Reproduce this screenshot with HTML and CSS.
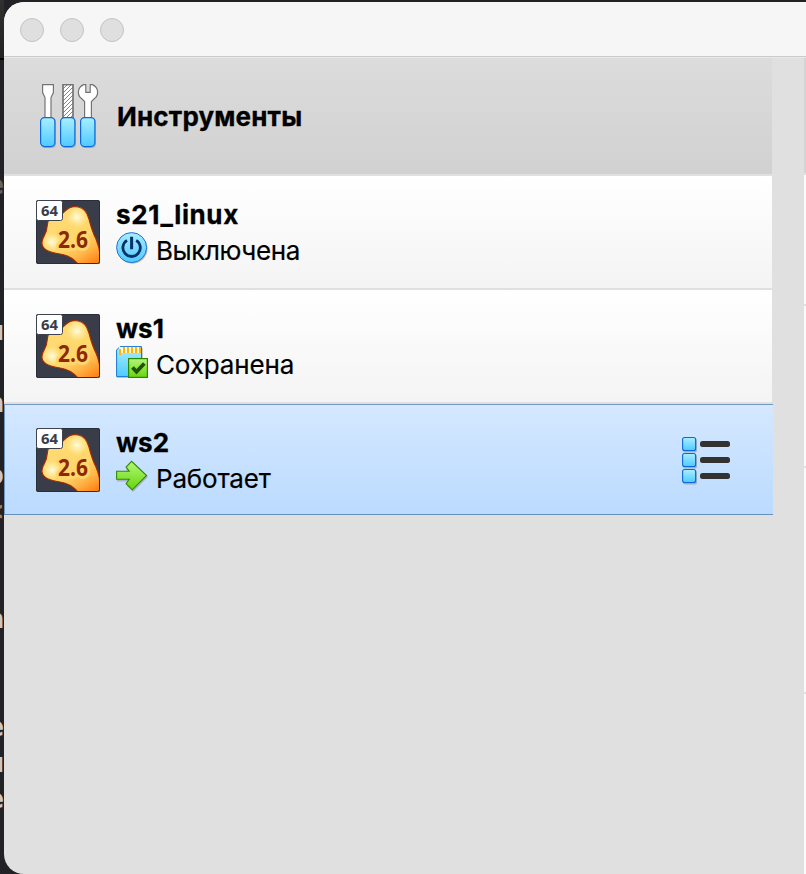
FILE: index.html
```
<!DOCTYPE html>
<html lang="ru">
<head>
<meta charset="utf-8">
<title>VirtualBox</title>
<link rel="stylesheet" href="styles.css">
</head>
<body>
<svg class="defs" aria-hidden="true">
  <defs>
    <linearGradient id="blue" x1="0" y1="0" x2="0" y2="1"><stop offset="0" stop-color="#a9eeff"/><stop offset="1" stop-color="#4fcaff"/></linearGradient>
    <linearGradient id="green" x1="0" y1="0" x2="0" y2="1"><stop offset="0" stop-color="#b2f878"/><stop offset="1" stop-color="#67d50d"/></linearGradient>
    <linearGradient id="shell" x1="0.2" y1="0" x2="0.85" y2="1"><stop offset="0" stop-color="#ffdc78"/><stop offset="0.6" stop-color="#ffd769"/><stop offset="0.8" stop-color="#ffb548"/><stop offset="1" stop-color="#ff8216"/></linearGradient>
    <radialGradient id="shine"><stop offset="0" stop-color="#fffce0"/><stop offset="1" stop-color="#fff3a8" stop-opacity="0"/></radialGradient>
    <pattern id="hatch" width="4" height="4" patternUnits="userSpaceOnUse"><path d="M-1 1L1-1M0 4L4 0M3 5L5 3" stroke="#777" stroke-width=".9"/></pattern>
    <clipPath id="tile"><rect width="64" height="64" rx="2"/></clipPath>
    <symbol id="linux" viewBox="0 0 64 64">
      <g clip-path="url(#tile)">
        <rect width="64" height="64" fill="#383d49"/>
        <path d="M12 21C21 19 25 15 29 11C33 7 38 6 42 7C48 8 51 12 53 19C55 27 57 33 60 39C63 46 65 56 64 65H43C38 59 32 55 24 54C17 53 7 51 6 44C5 38 11 34 11 27Z" fill="url(#shell)" stroke="#a52b00" stroke-width="1.2"/>
        <ellipse cx="41" cy="17" rx="11" ry="11" fill="url(#shine)"/>
        <ellipse cx="16" cy="42" rx="10" ry="10" fill="url(#shine)"/>
        <text class="version" x="22" y="48" textLength="30" lengthAdjust="spacingAndGlyphs">2.6</text>
      </g>
      <rect x=".5" y=".5" width="63" height="63" rx="2" fill="none" stroke="#2a2e38"/>
      <rect x=".5" y=".5" width="26" height="20" rx="2" fill="#fff" stroke="#3d424e"/>
      <text class="bits" x="5" y="16" textLength="17" lengthAdjust="spacingAndGlyphs">64</text>
    </symbol>
  </defs>
</svg>
<div class="backdrop" aria-hidden="true">
  <span class="g1">e</span><span class="g2">и</span><span class="g3">a</span><span class="g4">о</span><span class="g5">&lt;</span><span class="g6">a</span><span class="g7">e</span><span class="g8">и</span><span class="g9">e</span>
</div>
<main class="window">
  <header class="titlebar"><i></i><i></i><i></i></header>
  <div class="content">
    <section class="list">
      <div class="tools">
        <svg class="tool-icon" width="64" height="70" viewBox="0 0 64 70">
          <g fill="#fff" stroke="#747474" stroke-width="1.2">
            <path d="M6.6 4.6h10.8v8l-2.4 5v20H9v-20l-2.4-5z"/>
            <path d="M27 4.6h10v33H27z"/><path d="M27 4.6h10v33H27z" fill="url(#hatch)"/>
            <path d="M47.6 4.6h2.2v7.8h4.4V4.6h2.2c6.5 3 6.7 10.5 1.8 14.2l-2.8 2.8v16h-6.8v-16l-2.8-2.8c-4.9-3.7-4.7-11.2 1.8-14.2z"/>
          </g>
          <g fill="#777" opacity=".35"><rect x="5" y="38" width="15" height="30" rx="4"/><rect x="25" y="38" width="15" height="30" rx="4"/><rect x="45" y="38" width="15" height="30" rx="4"/></g>
          <g fill="url(#blue)" stroke="#0d69d8" stroke-width="1.2"><rect x="4.6" y="37.6" width="14.3" height="29" rx="4"/><rect x="24.6" y="37.6" width="14.3" height="29" rx="4"/><rect x="44.6" y="37.6" width="14.3" height="29" rx="4"/></g>
        </svg>
        <h1><span class="t-tools">Инструменты</span></h1>
      </div>
      <article class="vm">
        <svg class="os"><use href="#linux"/></svg>
        <div class="info">
          <h2><span class="t-s21">s21_linux</span></h2>
          <p><svg width="32" height="32" viewBox="0 0 32 32"><circle cx="16.5" cy="16.7" r="15" fill="#777" opacity=".45"/><circle cx="15.6" cy="15.6" r="15" fill="url(#blue)" stroke="#2071cf" stroke-width="1"/><path d="M11 8.4a8.7 8.7 0 1 0 9.2 0" fill="none" stroke="#07316b" stroke-width="2.8"/><path d="M15.6 4.7v12.5" stroke="#07316b" stroke-width="3"/></svg><span class="t-off">Выключена</span></p>
        </div>
      </article>
      <article class="vm">
        <svg class="os"><use href="#linux"/></svg>
        <div class="info">
          <h2><span class="t-ws">ws1</span></h2>
          <p><svg width="32" height="32" viewBox="0 0 32 32"><path d="M2 2h25v30H1z" fill="#777" opacity=".35"/><path d="M4 .6h21.5v30H.6V4z" fill="url(#blue)" stroke="#1878d8"/><path d="M3 1h22v6H5v2H3z" fill="#fff9df"/><path d="M3 3h2v6H3zM7 1h2v6H7zM11 1h2v6h-2zM15 1h2v6h-2zM19 1h2v6h-2zM23 1h2v6h-2z" fill="#ffb600"/><rect x="12.6" y="12.6" width="18.8" height="18.8" fill="url(#green)" stroke="#2d8500" stroke-width="1.2"/><path d="m16.5 21.5 4 4.2 7.8-8.2" fill="none" stroke="#245205" stroke-width="3.8"/></svg><span class="t-saved">Сохранена</span></p>
        </div>
      </article>
      <article class="vm selected">
        <svg class="os"><use href="#linux"/></svg>
        <div class="info">
          <h2><span class="t-ws">ws2</span></h2>
          <p><svg width="32" height="32" viewBox="0 0 32 32"><path d="M1 12.7h10l-1-6L16.5 2 32 17 17 32l-6-6 2-4.5H1z" fill="#777" opacity=".4"/><path d="M.6 11.2h12.6l-3.1-4.1L15.6 1.3l15 14.2-14.3 14.3-6.2-6.2 3.1-4.3H.6z" fill="url(#green)" stroke="#358900" stroke-width="1.1"/></svg><span class="t-run">Работает</span></p>
        </div>
        <svg class="menu" width="50" height="50" viewBox="0 0 50 50">
          <g fill="#666" opacity=".4"><rect x="1" y="2.5" width="14" height="14" rx="2"/><rect x="1" y="18.5" width="14" height="14" rx="2"/><rect x="1" y="34.5" width="14" height="14" rx="2"/></g>
          <g fill="url(#blue)" stroke="#0d69d8" stroke-width="1.1"><rect x=".6" y="1.5" width="13" height="13" rx="2"/><rect x=".6" y="17.5" width="13" height="13" rx="2"/><rect x=".6" y="33.5" width="13" height="13" rx="2"/></g>
          <g fill="#323232"><rect x="18" y="5" width="30" height="6" rx="2.5"/><rect x="18" y="21" width="30" height="6" rx="2.5"/><rect x="18" y="37" width="30" height="6" rx="2.5"/></g>
        </svg>
      </article>
    </section>
    <aside class="details"><div class="d-head"></div><div class="d-a"></div><div class="d-b"></div><div class="d-c"></div><div class="d-d"></div></aside>
  </div>
</main>
</body>
</html>
```
FILE: styles.css
```
* { box-sizing: border-box; }
body { margin: 0; width: 806px; height: 874px; overflow: hidden; background: #222226; font-family: Inter, "Liberation Sans", sans-serif; color: #000; padding: 2px 0 0 4px; position: relative; }
.defs { position: absolute; width: 0; height: 0; }
.backdrop { position: absolute; left: 0; top: 0; width: 4px; height: 874px; overflow: hidden; background: linear-gradient(#30302f 0, #222 58px, #000 58px, #000 60px, #222226 60px); font: bold 26px/30px "DejaVu Sans Mono", monospace; color: #c8c8c8; }
.backdrop span { position: absolute; right: 0; }
.g1 { top: 170px; opacity: .4; }
.g2 { top: 316px; }
.g3 { top: 388px; }
.g4 { top: 460px; }
.backdrop .g5 { top: 496px; right: 1px; color: #ad8453; }
.g6 { top: 604px; }
.g7 { top: 712px; }
.g8 { top: 748px; }
.g9 { top: 784px; }
.window { position: relative; width: 802px; height: 872px; overflow: hidden; border-radius: 20px 0 0 20px; background: #e0e0e0; }
.titlebar { height: 55px; display: flex; align-items: center; gap: 16px; padding-left: 16px; background: #f6f6f6; border-bottom: 1px solid #cbcbcb; }
.titlebar i { width: 24px; height: 24px; margin-top: 2px; border-radius: 50%; background: #dfdfdf; border: 1px solid #c3c3c3; }
.content { display: flex; height: 817px; border-top: 1px solid #e8e8e8; }
.list { width: 769px; }
.tools { height: 118px; display: flex; align-items: center; padding-left: 32px; background: linear-gradient(#dcdcdc, #d1d1d1); border-bottom: 2px solid #e0e0e0; width: 768px; }
.tool-icon { margin: -2px 17px 0 0; flex: none; }
h1, h2, p { margin: 0; font-size: 26px; line-height: 32px; }
h1 { margin-top: 2px; }
h1, h2 { font-weight: 700; -webkit-text-stroke: .3px #000; }
.t-tools { letter-spacing: .16px; }
.t-s21 { letter-spacing: .6px; }
.t-off { letter-spacing: -.4px; }
.t-saved { letter-spacing: -.15px; }
.t-run { letter-spacing: -.2px; }
.vm { height: 114px; display: flex; padding: 24px 0 0 32px; background: linear-gradient(#fff, #f4f4f4); border-bottom: 2px solid #e0e0e0; width: 768px; }
.os { width: 64px; height: 64px; flex: none; }
.info { margin-left: 16px; }
.info h2 { height: 32px; margin-top: -1px; }
.info p { display: flex; gap: 8px; margin-top: 1px; font-weight: 400; -webkit-text-stroke: .2px #000; }
.info p span { position: relative; top: 3px; }
.selected { width: 769px; height: 111px; background: linear-gradient(#d5e8ff, #bbdbff); border-bottom: 1px solid #6790bb; box-shadow: inset 0 1px #6f98c2, inset 1px 0 #6f98c2; }
.menu { margin: 8px 41px 0 auto; }
.details { margin-left: auto; width: 2px; display: flex; flex-direction: column; gap: 2px; }
.d-head { height: 115px; background: #d4d4d4; }
.d-a { height: 129px; background: #fafafa; }
.d-b { height: 160px; background: #fafafa; }
.d-c { height: 224px; background: #fafafa; }
.d-d { flex: 1; background: #fafafa; }
.version { font: bold 23px "Open Sans", "Noto Sans", sans-serif; fill: #8d2800; stroke: #ffd66b; stroke-width: 6px; stroke-linejoin: round; paint-order: stroke; }
.bits { font: bold 14px "Open Sans", "Noto Sans", sans-serif; fill: #383d49; }
```
